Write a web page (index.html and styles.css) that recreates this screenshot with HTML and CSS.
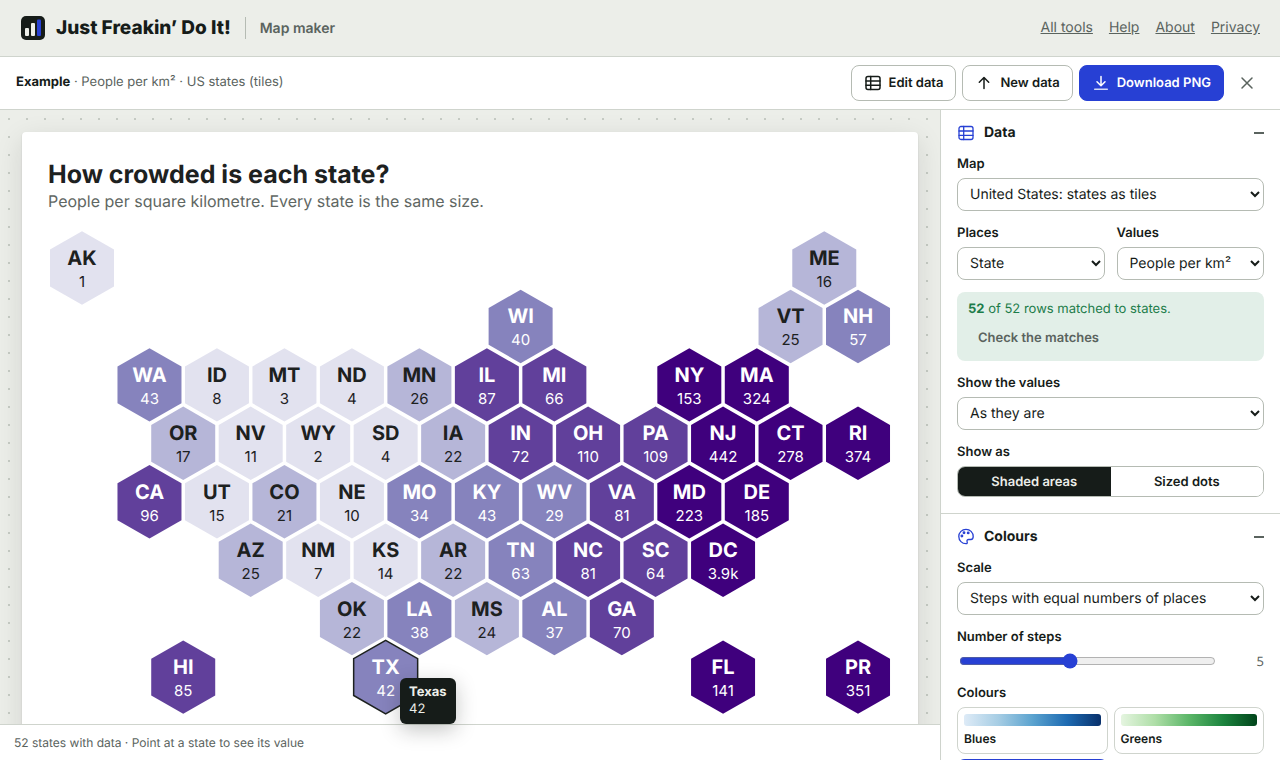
FILE: index.html
```html
<!DOCTYPE html>
<html lang="en-GB">
<head>
<meta charset="utf-8">
<meta name="viewport" content="width=device-width, initial-scale=1">
<title>Map maker – Just Freakin’ Do It!</title>
<link rel="stylesheet" href="styles.css">
</head>
<body>
<svg class="sprite" aria-hidden="true">
  <symbol id="i-table" viewBox="0 0 18 18"><rect x="2" y="2.500" width="14" height="13" rx="2"/><path d="M2 7h14M2 11.300h14M6.700 2.500v13"/></symbol>
  <symbol id="i-up" viewBox="0 0 18 18"><path d="M9 14.500V3.700M4.300 8.200 9 3.500l4.700 4.700"/></symbol>
  <symbol id="i-down" viewBox="0 0 18 18"><path d="M9 2.500v9M5 7.700l4 4 4-4"/><path opacity=".8" d="M2.700 15.300h12.600"/></symbol>
  <symbol id="i-close" viewBox="0 0 18 18"><path d="m4 4 10 10M14 4 4 14"/></symbol>
  <symbol id="i-palette" viewBox="0 0 18 18"><path d="M9 1.300a7.200 7.200 0 1 0 0 14.400c1.300 0 1.500-.9 1.100-1.900-.5-1.300.2-2.300 1.600-2.300h2.200c1.500 0 2.300-1.300 2.300-3C16.200 4.400 13 1.300 9 1.300Z"/><circle cx="4.900" cy="8" r=".8"/><circle cx="7" cy="4.800" r=".8"/><circle cx="11.200" cy="4.900" r=".8"/></symbol>
</svg>

<header class="masthead">
  <svg class="logo" viewBox="0 0 24 24" aria-hidden="true"><rect class="logo-box" width="24" height="24" rx="5"/><rect class="logo-bar" x="4" y="12" width="4" height="8" rx="1"/><rect class="logo-bar" x="10" y="7" width="4" height="13" rx="1"/><rect class="logo-accent" x="16" y="3.500" width="4" height="16.500" rx="1"/></svg>
  <span class="brand">Just Freakin’ Do It!</span>
  <span class="tool-name">Map maker</span>
  <nav class="site-nav">
    <a href="#">All tools</a><a href="#">Help</a><a href="#">About</a><a href="#">Privacy</a>
  </nav>
</header>

<div class="toolbar">
  <p class="file-info"><strong>Example</strong> · People per km² · US states (tiles)</p>
  <div class="actions">
    <button class="btn" type="button"><svg class="icon"><use href="#i-table"/></svg>Edit data</button>
    <button class="btn" type="button"><svg class="icon"><use href="#i-up"/></svg>New data</button>
    <button class="btn btn-primary" type="button"><svg class="icon"><use href="#i-down"/></svg>Download PNG</button>
    <button class="btn-close" type="button" aria-label="Close"><svg class="icon"><use href="#i-close"/></svg></button>
  </div>
</div>

<div class="workspace">
  <main class="stage">
    <div class="canvas">
      <div class="sheet">
        <svg id="map" class="map" viewBox="0 0 896 660" role="img" aria-label="How crowded is each state?">
          <defs><path id="hex" d="M0-36.700 32-18.400V18.400L0 36.700-32 18.400V-18.400Z"/></defs>
          <text class="map-title" x="26" y="51">How crowded is each state?</text>
          <text class="map-subtitle" x="26" y="75">People per square kilometre. Every state is the same size.</text>
        </svg>
        <div class="tooltip" role="tooltip"><strong>Texas</strong><span>42</span></div>
      </div>
    </div>
    <footer class="status">52 states with data · Point at a state to see its value</footer>
  </main>

  <aside class="panel">
    <section class="section">
      <h2 class="section-title"><svg class="icon"><use href="#i-table"/></svg>Data<button class="fold" type="button" aria-label="Collapse Data"></button></h2>
      <div class="field">
        <label for="f-map">Map</label>
        <select id="f-map"><option>United States: states as tiles</option></select>
      </div>
      <div class="pair">
        <div class="field">
          <label for="f-places">Places</label>
          <select id="f-places"><option>State</option></select>
        </div>
        <div class="field">
          <label for="f-values">Values</label>
          <select id="f-values"><option>People per km²</option></select>
        </div>
      </div>
      <div class="notice">
        <p><strong>52</strong> of 52 rows matched to states.</p>
        <button class="btn-quiet" type="button">Check the matches</button>
      </div>
      <div class="field">
        <label for="f-show">Show the values</label>
        <select id="f-show"><option>As they are</option></select>
      </div>
      <div class="field">
        <span class="label" id="l-as">Show as</span>
        <div class="segmented" role="group" aria-labelledby="l-as">
          <button type="button" aria-pressed="true">Shaded areas</button>
          <button type="button" aria-pressed="false">Sized dots</button>
        </div>
      </div>
    </section>

    <section class="section">
      <h2 class="section-title"><svg class="icon"><use href="#i-palette"/></svg>Colours<button class="fold" type="button" aria-label="Collapse Colours"></button></h2>
      <div class="field">
        <label for="f-scale">Scale</label>
        <select id="f-scale"><option>Steps with equal numbers of places</option></select>
      </div>
      <div class="field">
        <label for="f-steps">Number of steps</label>
        <div class="slider"><input id="f-steps" type="range" min="2" max="9" value="5"><output for="f-steps">5</output></div>
      </div>
      <div class="field">
        <span class="label" id="l-colours">Colours</span>
        <div class="swatches" role="group" aria-labelledby="l-colours">
          <button class="swatch" type="button"><span class="ramp ramp-blues"></span>Blues</button>
          <button class="swatch" type="button"><span class="ramp ramp-greens"></span>Greens</button>
          <button class="swatch swatch-on" type="button"><span class="ramp ramp-purples"></span></button>
        </div>
      </div>
    </section>
  </aside>
</div>
<script src="map.js"></script>
</body>
</html>
```

FILE: styles.css
```css
:root {
  --ink: #161c19;
  --muted: #5a635e;
  --paper: #eceee9;
  --line: #cfd4cd;
  --control: #b5bbb3;
  --blue: #2740d4;
  --green: #1c7c4a;
}

* { box-sizing: border-box; }

html, body { height: 100%; }

body {
  margin: 0;
  display: flex;
  flex-direction: column;
  overflow: hidden;
  background: #fff;
  color: var(--ink);
  font: 13px/20px Inter, "Liberation Sans", sans-serif;
  text-rendering: geometricPrecision;
}

button, select, input { font: inherit; color: inherit; margin: 0; text-rendering: inherit; }
p { margin: 0; }
.sprite { position: absolute; width: 0; height: 0; }

.icon {
  width: 18px;
  height: 18px;
  flex: none;
  fill: none;
  stroke: currentColor;
  stroke-width: 1.5;
  stroke-linecap: round;
  stroke-linejoin: round;
}

/* Header */
.masthead {
  display: flex;
  align-items: center;
  flex: none;
  height: 57px;
  padding: 0 20px;
  background: var(--paper);
  border-bottom: 1px solid var(--line);
}
.logo { width: 24px; height: 24px; margin: 0 11px 0 1px; }
.logo-box { fill: var(--ink); }
.logo-bar { fill: var(--paper); }
.logo-accent { fill: var(--blue); }
.brand { font-size: 19px; font-weight: 800; }
.tool-name {
  margin-left: 14px;
  padding: 2px 0 0 14px;
  border-left: 1px solid var(--control);
  color: var(--muted);
  font-size: 14px;
  font-weight: 600;
}
.site-nav { display: flex; gap: 16px; margin-left: auto; font-size: 14px; }
.site-nav a { color: var(--muted); }

/* Toolbar */
.toolbar {
  display: flex;
  align-items: center;
  justify-content: space-between;
  flex: none;
  padding: 8px 16px;
  border-bottom: 1px solid var(--line);
}
.file-info { padding-bottom: 2px; color: var(--muted); }
.file-info strong { color: var(--ink); }
.actions { display: flex; gap: 6px; }
.btn {
  display: flex;
  align-items: center;
  gap: 7px;
  height: 36px;
  padding: 0 12px;
  border: 1px solid var(--control);
  border-radius: 8px;
  background: #fff;
  font-weight: 600;
}
.btn-primary { background: var(--blue); border-color: var(--blue); color: #fff; }
.btn-close {
  display: grid;
  place-items: center;
  width: 34px;
  padding: 0;
  border: 0;
  background: none;
  color: var(--muted);
}

/* Workspace */
.workspace { display: flex; flex: 1; min-height: 0; }
.stage { display: flex; flex-direction: column; flex: 1; min-width: 0; }
.canvas {
  flex: 1;
  min-height: 0;
  padding: 22px;
  background: radial-gradient(circle, #c6cbc4 1px, transparent 1px) 0 0 / 18px 18px var(--paper);
}
.sheet {
  position: relative;
  background: #fff;
  border-radius: 4px;
  box-shadow: 0 1px 2px rgb(22 28 25 / 12%), 0 8px 28px rgb(22 28 25 / 12%);
}
.map { display: block; width: 100%; height: auto; }
.map-title { font-size: 25px; font-weight: 700; fill: #1d211f; }
.map-subtitle { font-size: 16px; fill: #5f6763; }
.tile text { text-anchor: middle; fill: #1d211f; }
.tile .code { font-size: 20px; font-weight: 700; }
.tile .value { font-size: 15px; }
.step-1 { fill: #e2e2ef; }
.step-2 { fill: #b6b6d8; }
.step-3 { fill: #8683bd; }
.step-4 { fill: #61409b; }
.step-5 { fill: #3f007d; }
.tile .on-dark { fill: #fff; }
.hover use { stroke: #1d211f; stroke-width: 1.5; }

.tooltip {
  position: absolute;
  left: 378px;
  top: 546px;
  z-index: 2;
  display: flex;
  flex-direction: column;
  padding: 6px 9px;
  border-radius: 6px;
  background: var(--ink);
  color: var(--paper);
  line-height: 17px;
  box-shadow: 0 6px 20px rgb(22 28 25 / 25%);
}

.status {
  position: relative;
  flex: none;
  padding: 8px 14px;
  border-top: 1px solid var(--line);
  background: #fff;
  color: var(--muted);
  font-size: 12px;
  line-height: 19px;
}

/* Side panel */
.panel {
  flex: none;
  width: 340px;
  overflow: hidden;
  border-left: 1px solid var(--line);
}
.section {
  display: flex;
  flex-direction: column;
  gap: 12px;
  padding: 12px 16px 16px;
  border-bottom: 1px solid var(--line);
}
.section-title {
  display: flex;
  align-items: center;
  gap: 9px;
  margin: 0 0 -2px;
  font-size: 14px;
  font-weight: 700;
  line-height: 22px;
}
.section-title .icon { color: var(--blue); stroke-width: 1.3; }
.fold {
  width: 10px;
  height: 22px;
  margin-left: auto;
  padding: 0;
  border: 0;
  background: linear-gradient(var(--muted), var(--muted)) center / 100% 2px no-repeat;
}
.field { display: flex; flex-direction: column; gap: 4px; min-width: 0; }
.field label, .label { font-weight: 600; }
.pair { display: grid; grid-template-columns: 1fr 1fr; gap: 12px; }
select {
  width: 100%;
  height: 33px;
  padding: 0 0 0 8px;
  border: 1px solid var(--control);
  border-radius: 8px;
  background: #fff;
  font-size: 14px;
}
.notice {
  padding: 7px 11px 5px;
  border-radius: 8px;
  background: #e2efe8;
  color: var(--green);
}
.notice p { line-height: 21px; }
.btn-quiet {
  display: block;
  height: 36px;
  padding: 0 10px;
  border: 0;
  background: none;
  color: var(--muted);
  font-weight: 600;
}
.segmented {
  display: grid;
  grid-template-columns: 1fr 1fr;
  height: 31px;
  overflow: hidden;
  border: 1px solid var(--control);
  border-radius: 8px;
}
.segmented button { border: 0; padding: 0; background: #fff; font-weight: 600; }
.segmented [aria-pressed="true"] { background: var(--ink); color: var(--paper); }
.slider { display: flex; align-items: center; gap: 10px; height: 20px; }
.slider input { flex: 1; min-width: 0; margin: 2px; accent-color: var(--blue); }
.slider output { width: 36px; text-align: right; color: var(--muted); font-family: "Noto Sans", sans-serif; }
.swatches { display: grid; grid-template-columns: 1fr 1fr; gap: 6px; }
.swatch {
  display: flex;
  flex-direction: column;
  gap: 3px;
  min-height: 47px;
  padding: 6px 6px 4px;
  border: 1px solid var(--line);
  border-radius: 8px;
  background: #fff;
  font-size: 12px;
  font-weight: 600;
  text-align: left;
}
.swatch-on { border-color: var(--blue); box-shadow: 0 0 0 1px var(--blue); }
.ramp { align-self: stretch; height: 12px; border-radius: 3px; }
.ramp-blues { background: linear-gradient(90deg, #deebf7, #a6cde4, #5ba3cf, #1e6bb2, #08306b); }
.ramp-greens { background: linear-gradient(90deg, #e5f5e0, #aedea7, #5bb668, #1c843e, #00441b); }
.ramp-purples { background: linear-gradient(90deg, #efedf5, #bcbddc, #8683bd, #61409b, #3f007d); }
```

FILE: map.js
```js
// Each tile: code, column, row, value, colour step
const tiles = [
  ["AK", 0, 0, "1", 1], ["ME", 11, 0, "16", 2],
  ["WI", 6.5, 1, "40", 3], ["VT", 10.5, 1, "25", 2], ["NH", 11.5, 1, "57", 3],
  ["WA", 1, 2, "43", 3], ["ID", 2, 2, "8", 1], ["MT", 3, 2, "3", 1], ["ND", 4, 2, "4", 1],
  ["MN", 5, 2, "26", 2], ["IL", 6, 2, "87", 4], ["MI", 7, 2, "66", 4], ["NY", 9, 2, "153", 5], ["MA", 10, 2, "324", 5],
  ["OR", 1.5, 3, "17", 2], ["NV", 2.5, 3, "11", 1], ["WY", 3.5, 3, "2", 1], ["SD", 4.5, 3, "4", 1],
  ["IA", 5.5, 3, "22", 2], ["IN", 6.5, 3, "72", 4], ["OH", 7.5, 3, "110", 4], ["PA", 8.5, 3, "109", 4],
  ["NJ", 9.5, 3, "442", 5], ["CT", 10.5, 3, "278", 5], ["RI", 11.5, 3, "374", 5],
  ["CA", 1, 4, "96", 4], ["UT", 2, 4, "15", 1], ["CO", 3, 4, "21", 2], ["NE", 4, 4, "10", 1],
  ["MO", 5, 4, "34", 3], ["KY", 6, 4, "43", 3], ["WV", 7, 4, "29", 3], ["VA", 8, 4, "81", 4],
  ["MD", 9, 4, "223", 5], ["DE", 10, 4, "185", 5],
  ["AZ", 2.5, 5, "25", 2], ["NM", 3.5, 5, "7", 1], ["KS", 4.5, 5, "14", 1], ["AR", 5.5, 5, "22", 2],
  ["TN", 6.5, 5, "63", 3], ["NC", 7.5, 5, "81", 4], ["SC", 8.5, 5, "64", 4], ["DC", 9.5, 5, "3.9k", 5],
  ["OK", 4, 6, "22", 2], ["LA", 5, 6, "38", 3], ["MS", 6, 6, "24", 2], ["AL", 7, 6, "37", 3], ["GA", 8, 6, "70", 4],
  ["HI", 1.5, 7, "85", 4], ["TX", 4.5, 7, "42", 3], ["FL", 9.5, 7, "141", 5], ["PR", 11.5, 7, "351", 5],
];

const NS = "http://www.w3.org/2000/svg";
const PITCH = 67.48;
const ROW = PITCH * Math.sqrt(3) / 2;
const map = document.getElementById("map");

function add(parent, name, attrs, text) {
  const node = document.createElementNS(NS, name);
  for (const key in attrs) node.setAttribute(key, attrs[key]);
  if (text) node.textContent = text;
  return parent.appendChild(node);
}

for (const [code, col, row, value, step] of tiles) {
  const x = 60 + col * PITCH;
  const y = 136 + row * ROW;
  const tone = step > 2 ? " on-dark" : "";
  const g = add(map, "g", {
    class: code === "TX" ? "tile hover" : "tile",
    transform: `translate(${x.toFixed(2)} ${y.toFixed(2)})`,
  });
  add(g, "use", { href: "#hex", class: `step-${step}` });
  add(g, "text", { class: "code" + tone, y: -3 }, code);
  add(g, "text", { class: "value" + tone, y: 19 }, value);
}
```
